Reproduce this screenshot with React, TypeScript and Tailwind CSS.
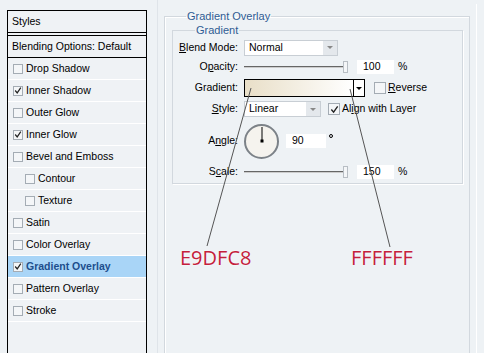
import type { ReactNode } from 'react';

const ui = { fontFamily: '"Liberation Sans", Arial, sans-serif' };

const styleItems: { label: string; checked?: boolean; indent?: boolean; active?: boolean }[] = [
  { label: 'Drop Shadow' },
  { label: 'Inner Shadow', checked: true },
  { label: 'Outer Glow' },
  { label: 'Inner Glow', checked: true },
  { label: 'Bevel and Emboss' },
  { label: 'Contour', indent: true },
  { label: 'Texture', indent: true },
  { label: 'Satin' },
  { label: 'Color Overlay' },
  { label: 'Gradient Overlay', checked: true, active: true },
  { label: 'Pattern Overlay' },
  { label: 'Stroke' },
];

function Check({ checked, size = 'sm' }: { checked?: boolean; size?: 'sm' | 'md' }) {
  const box = size === 'md' ? 'w-[12px] h-[12px]' : 'w-[10px] h-[10px]';
  return (
    <span
      className={`${box} shrink-0 border border-[#a4acb4] bg-[#f4f6f8] flex items-center justify-center`}
    >
      {checked && (
        <svg viewBox="0 0 10 10" className="w-[9px] h-[9px]">
          <path d="M1.5 5 L4 8 L8.5 1.5" fill="none" stroke="#222" strokeWidth="1.5" />
        </svg>
      )}
    </span>
  );
}

function Label({ children }: { children: ReactNode }) {
  return (
    <span className="w-[60px] shrink-0 whitespace-nowrap text-right text-[10.5px] text-black">{children}</span>
  );
}

function Slider() {
  return (
    <div className="relative w-[104px] h-full flex items-center">
      <div className="w-[100px] h-[2px] bg-[#666] border-b border-[#ccc]" />
      <div className="absolute left-[99px] top-1/2 -translate-y-1/2 w-[5px] h-[12px] bg-[#f4f6f8] border border-[#b8bec4]" />
    </div>
  );
}

function Field({ value, w }: { value: string; w: string }) {
  return (
    <div className={`${w} h-[14px] bg-white flex items-center pl-[6px] text-[10.5px] text-black`}>{value}</div>
  );
}

function Select({ value, w }: { value: string; w: string }) {
  return (
    <div className={`${w} h-[16px] bg-white border border-[#c8ced4] flex items-center text-[10.5px] text-black`}>
      <span className="flex-1 pl-[4px]">{value}</span>
      <span className="w-[14px] h-[14px] bg-[#e4e8ec] flex items-center justify-center">
        <span className="w-0 h-0 border-l-[3px] border-r-[3px] border-t-[3px] border-l-transparent border-r-transparent border-t-[#888]" />
      </span>
    </div>
  );
}

export default function App() {
  return (
    <div className="relative w-[484px] h-[353px] overflow-hidden bg-[#eef2f5] flex" style={ui}>
      {/* styles list */}
      <div className="ml-[7px] mt-[10px] w-[140px] h-[360px] shrink-0 border border-black bg-[#eff2f5] flex flex-col">
        <div className="h-[22px] flex items-center pl-[4px] text-[10.5px] text-black border-b border-black">Styles</div>
        <div className="h-[23px] mt-[2px] flex items-center pl-[4px] text-[10.5px] text-black border-t border-b border-black">
          Blending Options: Default
        </div>
        {styleItems.map((it) => (
          <div
            key={it.label}
            className={`h-[22px] flex items-center gap-[3px] border-b border-white ${it.indent ? 'pl-[17px]' : 'pl-[5px]'} ${
              it.active ? 'bg-[#a9d5f7] font-bold text-[#1d4e8c]' : 'text-black'
            } text-[10.5px]`}
          >
            <Check checked={it.checked} />
            <span>{it.label}</span>
          </div>
        ))}
      </div>

      {/* settings */}
      <div className="relative flex-1 pl-[17px] pt-[10px]">
        <div className="absolute left-[10px] top-0 w-px h-full bg-[#dfe4e9]" />
        <div className="absolute right-[7px] top-[4px] w-px h-full bg-[#d6dce2] border-r border-white" />
        <fieldset className="w-[306px] h-[360px] border border-[#d2d8de] shadow-[inset_1px_1px_0_#fff] pl-[7px]">
          <legend className="ml-[14px] px-[1px] text-[11px] leading-[13px] text-[#2f5c93]">Gradient Overlay</legend>
          <fieldset className="mt-[1px] w-[291px] border border-[#d2d8de] shadow-[1px_1px_0_#fff] pl-[5px] pt-[2px] pb-[4px]">
            <legend className="ml-[17px] px-[1px] text-[11px] leading-[13px] text-[#2f5c93]">Gradient</legend>

            <div className="h-[17px] flex items-center gap-[6px]">
              <Label>
                <span className="underline">B</span>lend Mode:
              </Label>
              <Select value="Normal" w="w-[94px]" />
            </div>

            <div className="mt-[3px] h-[15px] flex items-center gap-[6px]">
              <Label>
                O<span className="underline">p</span>acity:
              </Label>
              <Slider />
              <div className="ml-[3px]">
                <Field value="100" w="w-[37px]" />
              </div>
              <span className="ml-[-2px] text-[10.5px] text-black">%</span>
            </div>

            <div className="mt-[5px] h-[18px] flex items-center gap-[6px]">
              <Label>Gradient:</Label>
              <div className="w-[121px] h-[18px] border border-black flex">
                <div className="flex-1 bg-gradient-to-r from-[#e9dfc8] to-white" />
                <div className="w-[11px] border-l border-black bg-white flex items-center justify-center">
                  <span className="w-0 h-0 border-l-[3px] border-r-[3px] border-t-[3px] border-l-transparent border-r-transparent border-t-black" />
                </div>
              </div>
              <div className="ml-[3px] flex items-center gap-[2px] text-[10.5px] text-black">
                <Check size="md" />
                <span>
                  <span className="underline">R</span>everse
                </span>
              </div>
            </div>

            <div className="mt-[4px] h-[16px] flex items-center gap-[6px]">
              <Label>
                <span className="underline">S</span>tyle:
              </Label>
              <Select value="Linear" w="w-[77px]" />
              <div className="ml-[1px] flex items-center gap-[2px] text-[10.5px] text-black">
                <Check checked size="md" />
                <span>
                  Al<span className="underline">i</span>gn with Layer
                </span>
              </div>
            </div>

            <div className="mt-[6px] h-[36px] flex items-center gap-[6px]">
              <Label>
                A<span className="underline">n</span>gle:
              </Label>
              <div className="relative w-[35px] h-[35px] rounded-full border-2 border-[#7c8288] bg-[#f5f3ee]">
                <div className="absolute left-1/2 top-[1px] w-px h-[15px] -translate-x-1/2 bg-black" />
                <div className="absolute left-1/2 top-1/2 w-[3px] h-[3px] -translate-x-1/2 -translate-y-1/2 bg-black" />
              </div>
              <div className="ml-[1px]">
                <Field value="90" w="w-[40px]" />
              </div>
              <span className="self-start mt-[11px] ml-[-3px] w-[4px] h-[4px] rounded-full border border-black" />
            </div>

            <div className="mt-[6px] h-[14px] flex items-center gap-[6px]">
              <Label>
                S<span className="underline">c</span>ale:
              </Label>
              <Slider />
              <div className="ml-[3px]">
                <Field value="150" w="w-[37px]" />
              </div>
              <span className="ml-[-2px] text-[10.5px] text-black">%</span>
            </div>
          </fieldset>
        </fieldset>
      </div>

      {/* annotations */}
      <svg className="absolute left-0 top-0 w-[484px] h-[353px] pointer-events-none" viewBox="0 0 484 353">
        <line x1="251" y1="88" x2="207" y2="246" stroke="#555" strokeWidth="1" />
        <line x1="350" y1="89" x2="390" y2="247" stroke="#555" strokeWidth="1" />
      </svg>
      <span
        className="absolute left-[180px] top-[246px] text-[20px] leading-[24px] text-[#c4203c] [text-shadow:0_0_2px_#fff]"
        style={{ fontFamily: '"Open Sans", sans-serif' }}
      >
        E9DFC8
      </span>
      <span
        className="absolute left-[351px] top-[246px] text-[20px] leading-[24px] text-[#c4203c] [text-shadow:0_0_2px_#fff]"
        style={{ fontFamily: '"Open Sans", sans-serif' }}
      >
        FFFFFF
      </span>
    </div>
  );
}
